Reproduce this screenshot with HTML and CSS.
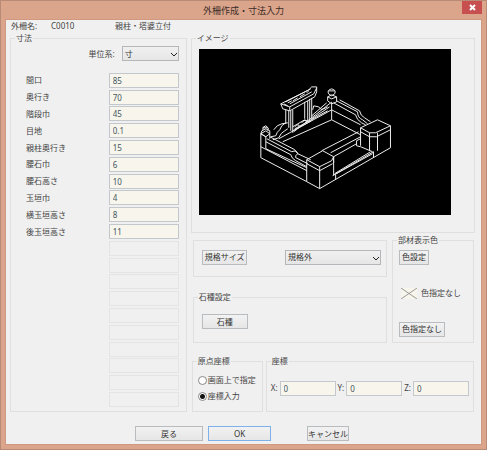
FILE: index.html
```
<!DOCTYPE html>
<html lang="ja">
<head>
    <meta charset="UTF-8">
    <meta name="viewport" content="width=device-width, initial-scale=1.0">
    <title>外柵作成・寸法入力</title>
    <link rel="stylesheet" href="styles.css">
</head>
<body>
    <form class="window">
        <header class="titlebar">
            <h1>外柵作成・寸法入力</h1>
            <button type="button" class="close" aria-label="閉じる">
                <svg width="7" height="7" viewBox="0 0 7 7"><path d="M1 1L6 6M6 1L1 6"/></svg>
            </button>
        </header>

        <main class="client">
            <div class="info">
                <span class="info-label">外柵名:</span>
                <span class="info-code">C0010</span>
                <span>親柱・塔婆立付</span>
            </div>

            <div class="columns">
                <section class="group sizes">
                    <h2>寸法</h2>
                    <div class="unit">
                        <label for="unit">単位系:</label>
                        <span class="select"><select id="unit"><option>寸</option></select><svg width="8" height="5" viewBox="0 0 8 5"><path d="M1 1L4 4L7 1"/></svg></span>
                    </div>
                    <div class="rows">
                        <div class="row"><label for="s1">間口</label><input type="text" id="s1" value="85"></div>
                        <div class="row"><label for="s2">奥行き</label><input type="text" id="s2" value="70"></div>
                        <div class="row"><label for="s3">階段巾</label><input type="text" id="s3" value="45"></div>
                        <div class="row"><label for="s4">目地</label><input type="text" id="s4" value="0.1"></div>
                        <div class="row"><label for="s5">親柱奥行き</label><input type="text" id="s5" value="15"></div>
                        <div class="row"><label for="s6">腰石巾</label><input type="text" id="s6" value="6"></div>
                        <div class="row"><label for="s7">腰石高さ</label><input type="text" id="s7" value="10"></div>
                        <div class="row"><label for="s8">玉垣巾</label><input type="text" id="s8" value="4"></div>
                        <div class="row"><label for="s9">横玉垣高さ</label><input type="text" id="s9" value="8"></div>
                        <div class="row"><label for="s10">後玉垣高さ</label><input type="text" id="s10" value="11"></div>
                        <div class="row"><label for="s11"></label><input type="text" id="s11" disabled></div>
                        <div class="row"><label for="s12"></label><input type="text" id="s12" disabled></div>
                        <div class="row"><label for="s13"></label><input type="text" id="s13" disabled></div>
                        <div class="row"><label for="s14"></label><input type="text" id="s14" disabled></div>
                        <div class="row"><label for="s15"></label><input type="text" id="s15" disabled></div>
                        <div class="row"><label for="s16"></label><input type="text" id="s16" disabled></div>
                        <div class="row"><label for="s17"></label><input type="text" id="s17" disabled></div>
                        <div class="row"><label for="s18"></label><input type="text" id="s18" disabled></div>
                        <div class="row"><label for="s19"></label><input type="text" id="s19" disabled></div>
                        <div class="row"><label for="s20"></label><input type="text" id="s20" disabled></div>
                    </div>
                </section>

                <div class="right">
                    <section class="group image">
                        <h2>イメージ</h2>
                        <svg class="preview" viewBox="198 49 253 166">
                            <!-- 左の壁 -->
                            <path d="M260 134L265 137V149M260 134V158L306 182M260 134L265 131L269 134V139M260 147L306 171M265 149L306 168M266 139L291 152M269 137L294 150M265 142L290 155"/>
                            <path d="M291 152Q296 150 297 154Q294 156 295 158L307 164M290 155Q291 159 295 161L306 167M294 150L297 154L310 160"/>
                            <!-- 奥の壁 -->
                            <path d="M270 137L275 136Q276 132 279 130L281 126L285 123M272 140L278 138Q280 133 284 131L287 129M273 130Q276 125 281 124L287 123"/>
                            <path d="M278 139L331 110M293 132L330 103M282 142L331 120L360 135M294 129L327 111M311 119L329 107M311 116L326 103"/>
                            <path d="M312 110L313 106L318 107Q320 111 323 109L327 107"/>
                            <!-- 右の壁 -->
                            <path d="M331 102V120M336 101L357 112Q357 118 362 120L367 124M333 103L355 115Q356 120 361 123L365 125M331 110L360 125M339 100L359 111Q360 116 364 118L370 122"/>
                            <!-- 親柱の頭 -->
                            <path d="M327 97L331 95L336 97V102L331 104L327 101ZM327 97L331 99L336 97M328 94Q326 90 331 89Q336 90 334 94L331 96ZM328 91H334"/>
                            <path d="M261 131L265 129L269 131V134L265 137L260 134ZM262 130Q261 127 265 126Q269 128 267 131M262 128H267"/>
                            <!-- 塔婆立 -->
                            <path d="M280 104L308 90L311 87L316 87V92L314 97L289 111L282 109ZM280 104L289 107L313 94L316 88M289 107V111M283 104L287 106M285 102L310 89"/>
                            <path d="M287 103L291 101M292 101L297 98M299 97L304 94M306 93L308 91M289 104L311 92"/>
                            <path d="M285 110V124M288 111V128M290 111V131M292 110V133M304 102V119M307 101V122M309 99V122M311 98V119M292 127L304 120L308 122M292 131L309 122L312 119M294 127Q298 123 299 127M301 123Q305 118 306 123"/>
                            <!-- 手前の柱 -->
                            <path d="M306 160L322 151L333 157L331 161L319 167ZM306 160V182L319 189L390 148M319 167V189M306 164L319 171L332 164M333 157V163M333 157V176"/>
                            <path d="M360 128L377 120L390 126V148M360 128L369 133H375L390 126M360 128V146M360 132L369 137H376L390 130M369 133V151M377 133V151"/>
                            <!-- 階段 -->
                            <path d="M332 176L373 152V158M334 174L370 152M334 175L372 154M335 175V180M333 157L356 144M330 153L360 137M356 141V146L360 147L372 152M356 141L360 139M321 151L358 132"/>
                        </svg>
                    </section>

                    <div class="options">
                        <div class="options-left">
                            <section class="group standard">
                                <button type="button" class="btn">規格サイズ</button>
                                <span class="select wide"><select aria-label="規格"><option>規格外</option></select><svg width="8" height="5" viewBox="0 0 8 5"><path d="M1 1L4 4L7 1"/></svg></span>
                            </section>
                            <section class="group stone">
                                <h2>石種設定</h2>
                                <button type="button" class="btn">石種</button>
                            </section>
                        </div>
                        <section class="group color">
                            <h2>部材表示色</h2>
                            <button type="button" class="btn">色設定</button>
                            <div class="swatch">
                                <svg width="16" height="11" viewBox="0 0 16 11"><path d="M0 0L16 11M16 0L0 11"/></svg>
                                <span>色指定なし</span>
                            </div>
                            <button type="button" class="btn">色指定なし</button>
                        </section>
                    </div>

                    <div class="position">
                        <section class="group origin">
                            <h2>原点座標</h2>
                            <label><input type="radio" name="origin">画面上で指定</label>
                            <label><input type="radio" name="origin" checked>座標入力</label>
                        </section>
                        <section class="group coords">
                            <h2>座標</h2>
                            <label for="x">X:</label><input type="text" id="x" value="0">
                            <label for="y">Y:</label><input type="text" id="y" value="0">
                            <label for="z">Z:</label><input type="text" id="z" value="0">
                        </section>
                    </div>
                </div>
            </div>

            <footer class="actions">
                <button type="button" class="btn back">戻る</button>
                <button type="submit" class="btn ok">OK</button>
                <button type="button" class="btn cancel">キャンセル</button>
            </footer>
        </main>
    </form>
</body>
</html>
```
FILE: styles.css
```
* {
    box-sizing: border-box;
}
body {
    margin: 0;
    font-family: "Noto Sans", "Noto Sans CJK JP", sans-serif;
    font-size: 8px;
    line-height: 12px;
    color: #444;
}
.window {
    display: flex;
    flex-direction: column;
    min-height: 100vh;
    padding: 0 4px 4px;
    border: 1px solid #b88b76;
    background-color: #dba58c;
}
.titlebar {
    display: flex;
    justify-content: center;
    position: relative;
    height: 18px;
}
h1 {
    margin: 0;
    font-size: 9px;
    font-weight: normal;
    line-height: 19px;
    color: #3c2c26;
}
.close {
    position: absolute;
    top: 0;
    right: 0;
    display: flex;
    align-items: center;
    justify-content: center;
    width: 20px;
    height: 13px;
    padding: 0;
    border: none;
    background-color: #c84f50;
}
.close svg {
    fill: none;
    stroke: #fff;
    stroke-width: 2;
}
.client {
    display: flex;
    flex: 1;
    flex-direction: column;
    padding: 0 6px 3px 4px;
    border: 1px solid #cf9880;
    background-color: #f0f0f0;
}
.info {
    display: flex;
    padding-left: 1px;
}
.info-label {
    width: 40px;
}
.info-code {
    width: 64px;
}
.columns {
    display: flex;
    flex: 1;
    gap: 4px;
    padding-top: 6px;
}
.group {
    position: relative;
    border: 1px solid #dfdfdf;
}
/* 枠線の上に載る見出し */
h2 {
    position: absolute;
    top: -7px;
    left: 4px;
    margin: 0;
    padding: 0 1px;
    font-size: 8px;
    font-weight: normal;
    line-height: 12px;
    background-color: #f0f0f0;
}
input[type="text"] {
    width: 70px;
    height: 15px;
    padding: 0 3px;
    border: 1px solid #c3c8cc;
    background-color: #f7f5ec;
    font: inherit;
    color: #45565c;
}
input[type="text"]:disabled {
    border-color: #e4e4e2;
    background-color: #f0f0f0;
}
.btn {
    height: 15px;
    padding: 0 2px;
    border: 1px solid #b9bcbf;
    background: linear-gradient(#f2f2f2, #e6e6e6);
    font: inherit;
    line-height: 12px;
    color: #333;
    white-space: nowrap;
}
.select {
    position: relative;
    display: block;
    width: 57px;
    height: 15px;
}
.select select {
    display: block;
    width: 100%;
    height: 100%;
    padding: 0 2px;
    border: 1px solid #b4b6b9;
    border-radius: 0;
    background: linear-gradient(#f0f0f0, #e6e6e6);
    appearance: none;
    font: inherit;
    color: #333;
}
.select svg {
    position: absolute;
    top: 6px;
    right: 1px;
    fill: none;
    stroke: #222;
    pointer-events: none;
}
.sizes {
    display: flex;
    flex: none;
    flex-direction: column;
    width: 38%;
    padding: 7px 7px 3px 15px;
}
.unit {
    display: flex;
    align-items: center;
    justify-content: flex-end;
    gap: 7px;
    margin-bottom: 11px;
}
.rows {
    display: flex;
    flex: 1;
    flex-direction: column;
}
.row {
    display: flex;
    flex: 1;
    align-items: center;
    justify-content: space-between;
}
.right {
    display: flex;
    flex: 1;
    flex-direction: column;
    min-width: 0;
}
.image {
    padding: 10px 23px 17px 7px;
}
.preview {
    display: block;
    width: 100%;
    background-color: #000;
    fill: none;
    stroke: #eee;
}
.options {
    display: flex;
    flex: 1;
    gap: 5px;
    margin: 7px 1px 0 2px;
}
.options-left {
    display: flex;
    flex: 1;
    flex-direction: column;
    justify-content: space-between;
}
.standard {
    display: flex;
    justify-content: space-between;
    padding: 9px 5px 11px 8px;
}
.wide {
    width: 96px;
}
.stone {
    padding: 16px 8px 13px;
}
.stone .btn {
    display: block;
    width: 46px;
}
.color {
    display: flex;
    flex-direction: column;
    align-items: flex-start;
    justify-content: space-between;
    width: 82px;
    padding: 9px 6px 5px;
}
.swatch {
    display: flex;
    align-items: center;
    gap: 4px;
    padding-left: 2px;
}
.swatch svg {
    background-color: #f7f5ec;
    fill: none;
    stroke: #999;
}
.position {
    display: flex;
    gap: 3px;
    margin: 18px 1px 0;
}
.origin {
    display: flex;
    flex-direction: column;
    gap: 4px;
    width: 71px;
    padding: 12px 0 9px 5px;
}
.origin label {
    display: flex;
    align-items: center;
    gap: 1px;
    white-space: nowrap;
}
.origin input {
    width: 9px;
    height: 9px;
    margin: 0;
    border: 1px solid #888;
    border-radius: 50%;
    background-color: #fff;
    appearance: none;
}
.origin input:checked {
    background-image: radial-gradient(#111 2px, #fff 3px);
}
.coords {
    display: flex;
    flex: 1;
    align-items: center;
    gap: 2px;
    padding: 3px 4px 0;
}
.coords input[type="text"] {
    flex: 1;
    width: 0;
    min-width: 0;
}
.actions {
    display: flex;
    padding: 14px 0 0 125px;
}
.back {
    width: 68px;
}
.ok {
    width: 63px;
    margin-left: 5px;
    border-color: #7eb0ea;
}
.cancel {
    width: 42px;
    margin-left: 36px;
    padding: 0;
}
```
